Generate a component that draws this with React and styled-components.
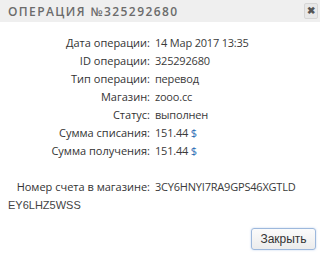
import React from 'react';
import styled, { createGlobalStyle } from 'styled-components';

const GlobalStyle = createGlobalStyle`
    html, body {
        margin: 0;
        padding: 0;
        background: #ffffff;
    }
    body {
        font-family: "Open Sans", "DejaVu Sans", sans-serif;
    }
`;

const Dialog = styled.div`
    width: 320px;
    height: 255px;
    background: #ffffff;
    display: flex;
    flex-direction: column;
    overflow: hidden;
`;

const Header = styled.div`
    height: 22px;
    background: #efefef;
    display: flex;
    align-items: center;
    justify-content: space-between;
    padding: 0 2px 0 8px;
`;

const Title = styled.h1`
    margin: 0;
    font-size: 12px;
    font-weight: 600;
    letter-spacing: 1.4px;
    color: #6b6b6b;
    text-transform: uppercase;
`;

const CloseBox = styled.button`
    width: 14px;
    height: 16px;
    padding: 0;
    border: 1px solid #d6d6d6;
    border-radius: 2px;
    background: #e8e8e8;
    color: #555;
    font-size: 10px;
    font-weight: bold;
    line-height: 1;
    display: flex;
    align-items: center;
    justify-content: center;
`;

const Body = styled.div`
    flex: 1;
    padding-top: 12px;
`;

const Details = styled.div`
    display: grid;
    grid-template-columns: 150px 1fr;
    column-gap: 5px;
    font-size: 11px;
    color: #333;
`;

const Label = styled.div`
    text-align: right;
    height: 18px;
    line-height: 18px;
    white-space: nowrap;
`;

const Value = styled.div`
    height: 18px;
    line-height: 18px;
    white-space: nowrap;
    letter-spacing: -0.2px;
    color: #3a3a3a;
`;

const Spacer = styled.div`
    grid-column: 1 / 3;
    height: 18px;
`;

const Currency = styled.span`
    color: #2b6cb4;
`;

const Overflow = styled.div`
    padding-left: 8px;
    height: 18px;
    line-height: 18px;
    font-family: "Liberation Sans", Arial, sans-serif;
    font-size: 11px;
    color: #444;
`;

const Footer = styled.div`
    display: flex;
    justify-content: flex-end;
    padding: 0 4px 5px 0;
`;

const CloseButton = styled.button`
    width: 65px;
    height: 22px;
    border: 1px solid #9db8dc;
    border-radius: 3px;
    background: linear-gradient(#fbfbfb, #ececec);
    box-shadow: 0 0 2px rgba(120, 160, 220, 0.5);
    font-family: "Liberation Sans", Arial, sans-serif;
    font-size: 12px;
    color: #333;
    padding: 0;
`;

const rows = [
    ['Дата операции:', '14 Мар 2017 13:35'],
    ['ID операции:', '325292680'],
    ['Тип операции:', 'перевод'],
    ['Магазин:', 'zooo.cc'],
    ['Статус:', 'выполнен'],
    ['Сумма списания:', '151.44', true],
    ['Сумма получения:', '151.44', true],
];

export default function App() {
    return (
        <>
            <GlobalStyle />
            <Dialog>
                <Header>
                    <Title>Операция №325292680</Title>
                    <CloseBox>✖</CloseBox>
                </Header>
                <Body>
                    <Details>
                        {rows.map(([label, value, money]) => (
                            <React.Fragment key={label}>
                                <Label>{label}</Label>
                                <Value>
                                    {value}
                                    {money && <Currency> $</Currency>}
                                </Value>
                            </React.Fragment>
                        ))}
                        <Spacer />
                        <Label>Номер счета в магазине:</Label>
                        <Value>3CY6HNYI7RA9GPS46XGTLD</Value>
                    </Details>
                    <Overflow>EY6LHZ5WSS</Overflow>
                </Body>
                <Footer>
                    <CloseButton>Закрыть</CloseButton>
                </Footer>
            </Dialog>
        </>
    );
}
